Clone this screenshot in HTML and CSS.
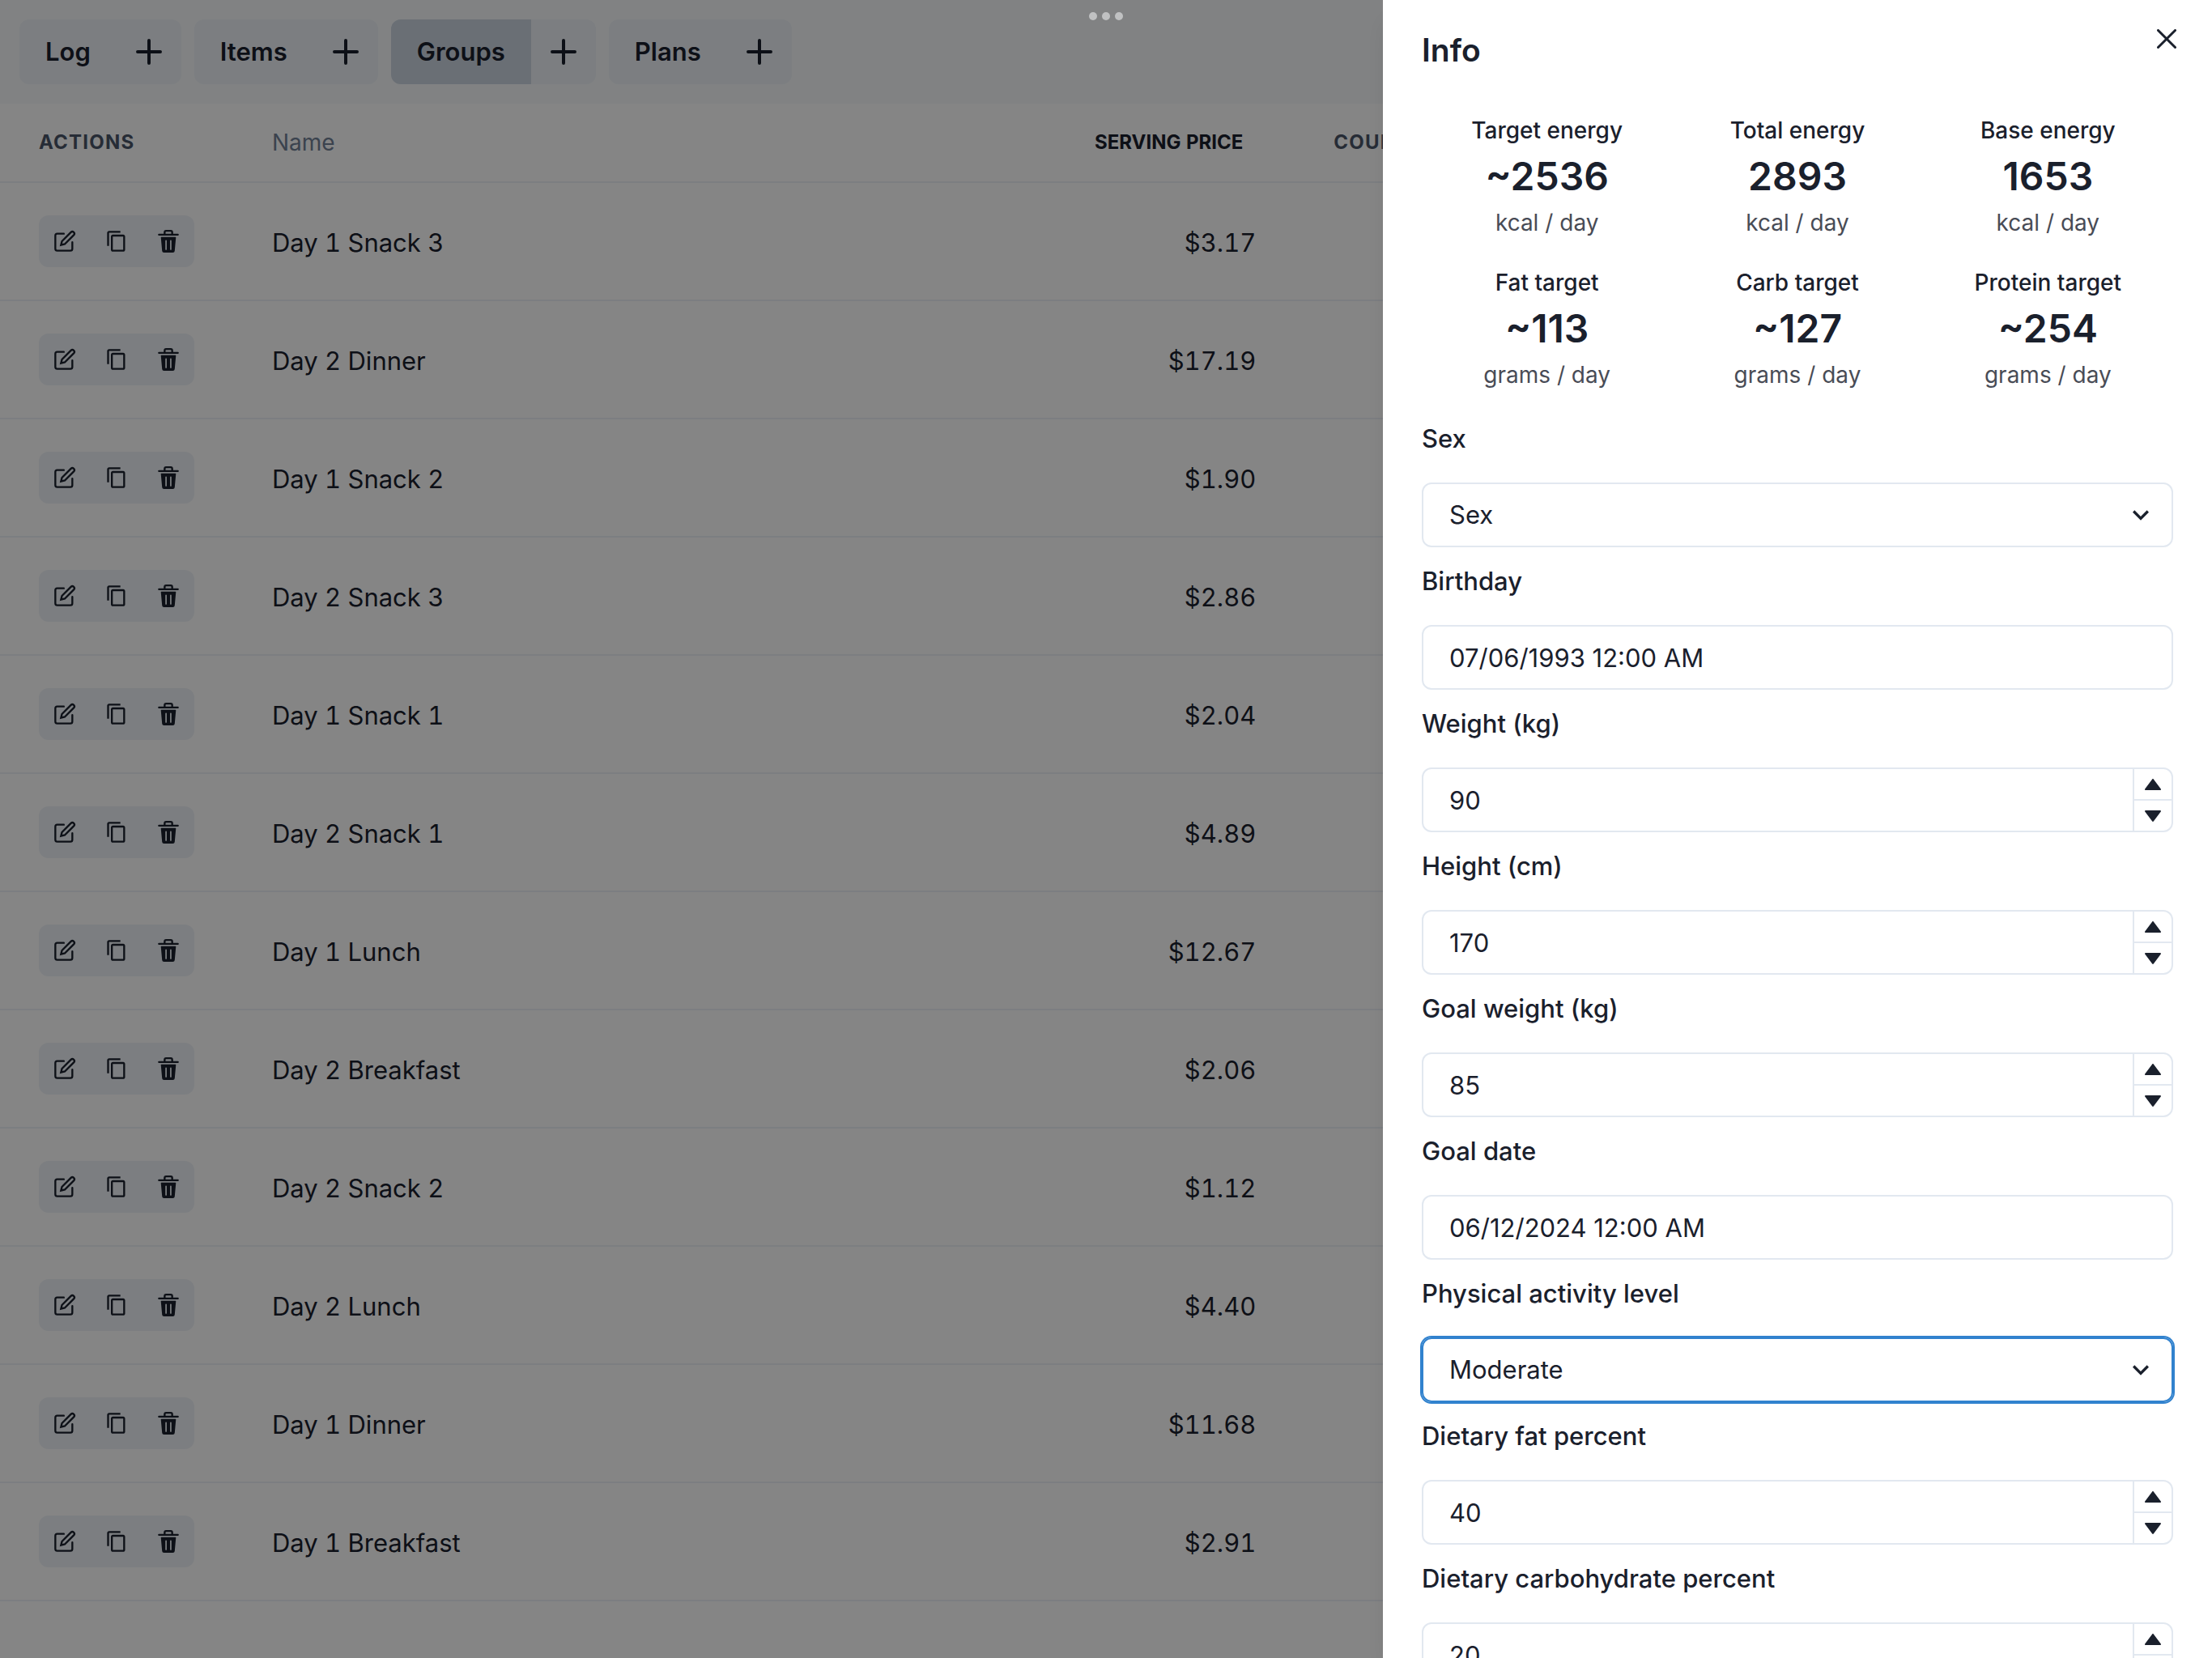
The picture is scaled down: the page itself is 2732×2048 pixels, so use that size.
FILE: index.html
```html
<!DOCTYPE html>
<html lang="en">
<head>
<meta charset="utf-8">
<meta name="viewport" content="width=device-width, initial-scale=1">
<title>Groups</title>
<link rel="stylesheet" href="styles.css">
</head>
<body>
<svg class="sprite" aria-hidden="true">
  <symbol id="i-add" viewBox="0 0 24 24"><path fill="currentColor" d="M0,12a1.5,1.5,0,0,0,1.5,1.5h8.75a.25.25,0,0,1,.25.25V22.5a1.5,1.5,0,0,0,3,0V13.75a.25.25,0,0,1,.25-.25H22.5a1.5,1.5,0,0,0,0-3H13.75a.25.25,0,0,1-.25-.25V1.5a1.5,1.5,0,0,0-3,0v8.75a.25.25,0,0,1-.25.25H1.5A1.5,1.5,0,0,0,0,12Z"/></symbol>
  <symbol id="i-edit" viewBox="0 0 24 24"><g fill="none" stroke="currentColor" stroke-width="2" stroke-linecap="round"><path d="M11 4H4a2 2 0 0 0-2 2v14a2 2 0 0 0 2 2h14a2 2 0 0 0 2-2v-7"/><path d="M18.5 2.5a2.121 2.121 0 0 1 3 3L12 15l-4 1 1-4 9.5-9.5z"/></g></symbol>
  <symbol id="i-copy" viewBox="0 0 24 24"><path fill="currentColor" d="M16 1H4c-1.1 0-2 .9-2 2v14h2V3h12V1zm3 4H8c-1.1 0-2 .9-2 2v14c0 1.1.9 2 2 2h11c1.1 0 2-.9 2-2V7c0-1.1-.9-2-2-2zm0 16H8V7h11v14z"/></symbol>
  <symbol id="i-delete" viewBox="0 0 24 24"><path fill="currentColor" d="M19.452 7.5H4.547a.5.5 0 00-.5.545l1.287 14.136A2 2 0 007.326 24h9.347a2 2 0 001.992-1.819L19.95 8.045a.5.5 0 00-.129-.382.5.5 0 00-.369-.163zm-9.2 13a.75.75 0 01-1.5 0v-9a.75.75 0 011.5 0zm5 0a.75.75 0 01-1.5 0v-9a.75.75 0 011.5 0zM22 4h-4.75a.25.25 0 01-.25-.25V2.5A2.5 2.5 0 0014.5 0h-5A2.5 2.5 0 007 2.5v1.25a.25.25 0 01-.25.25H2a1 1 0 000 2h20a1 1 0 000-2zM9 3.75V2.5a.5.5 0 01.5-.5h5a.5.5 0 01.5.5v1.25a.25.25 0 01-.25.25h-5.5A.25.25 0 019 3.75z"/></symbol>
  <symbol id="i-close" viewBox="0 0 24 24"><path fill="currentColor" d="M.439,21.44a1.5,1.5,0,0,0,2.122,2.121L11.823,14.3a.25.25,0,0,1,.354,0l9.262,9.263a1.5,1.5,0,1,0,2.122-2.121L14.3,12.177a.25.25,0,0,1,0-.354l9.263-9.262A1.5,1.5,0,0,0,21.439.44L12.177,9.7a.25.25,0,0,1-.354,0L2.561.44A1.5,1.5,0,0,0,.439,2.561L9.7,11.823a.25.25,0,0,1,0,.354Z"/></symbol>
  <symbol id="i-chevron" viewBox="0 0 24 24"><path fill="currentColor" d="M16.59 8.59L12 13.17 7.41 8.59 6 10l6 6 6-6z"/></symbol>
  <symbol id="i-up" viewBox="0 0 24 24"><path fill="currentColor" d="M12.8,5.4c-0.377-0.504-1.223-0.504-1.6,0l-9,12c-0.228,0.303-0.264,0.708-0.095,1.047C2.275,18.786,2.621,19,3,19h18c0.379,0,0.725-0.214,0.895-0.553c0.169-0.339,0.133-0.744-0.095-1.047L12.8,5.4z"/></symbol>
  <symbol id="i-down" viewBox="0 0 24 24"><path fill="currentColor" d="M21,5H3C2.621,5,2.275,5.214,2.105,5.553C1.937,5.892,1.973,6.297,2.2,6.6l9,12c0.188,0.252,0.485,0.4,0.8,0.4s0.611-0.148,0.8-0.4l9-12c0.228-0.303,0.264-0.708,0.095-1.047C21.725,5.214,21.379,5,21,5z"/></symbol>
</svg>

<div class="page">
  <nav class="topbar" aria-label="Main">
    <div class="tab"><a class="tab-link" href="#log">Log</a><button class="tab-add" type="button" aria-label="Add log"><svg><use href="#i-add"/></svg></button></div>
    <div class="tab"><a class="tab-link" href="#items">Items</a><button class="tab-add" type="button" aria-label="Add item"><svg><use href="#i-add"/></svg></button></div>
    <div class="tab"><a class="tab-link active" href="#groups" aria-current="page">Groups</a><button class="tab-add" type="button" aria-label="Add group"><svg><use href="#i-add"/></svg></button></div>
    <div class="tab"><a class="tab-link" href="#plans">Plans</a><button class="tab-add" type="button" aria-label="Add plan"><svg><use href="#i-add"/></svg></button></div>
  </nav>

  <table class="groups">
    <colgroup><col class="col-actions"><col class="col-name"><col class="col-price"><col></colgroup>
    <thead>
      <tr>
        <th scope="col">Actions</th>
        <th scope="col"><input class="filter" type="text" placeholder="Name" aria-label="Name"></th>
        <th scope="col" class="num"><button class="sort" type="button">Serving price</button></th>
        <th scope="col">Count</th>
      </tr>
    </thead>
    <tbody>
      <tr><td><div class="actions"><button type="button" aria-label="Edit"><svg><use href="#i-edit"/></svg></button><button type="button" aria-label="Copy"><svg><use href="#i-copy"/></svg></button><button type="button" aria-label="Delete"><svg><use href="#i-delete"/></svg></button></div></td><td>Day 1 Snack 3</td><td class="num">$3.17</td><td></td></tr>
      <tr><td><div class="actions"><button type="button" aria-label="Edit"><svg><use href="#i-edit"/></svg></button><button type="button" aria-label="Copy"><svg><use href="#i-copy"/></svg></button><button type="button" aria-label="Delete"><svg><use href="#i-delete"/></svg></button></div></td><td>Day 2 Dinner</td><td class="num">$17.19</td><td></td></tr>
      <tr><td><div class="actions"><button type="button" aria-label="Edit"><svg><use href="#i-edit"/></svg></button><button type="button" aria-label="Copy"><svg><use href="#i-copy"/></svg></button><button type="button" aria-label="Delete"><svg><use href="#i-delete"/></svg></button></div></td><td>Day 1 Snack 2</td><td class="num">$1.90</td><td></td></tr>
      <tr><td><div class="actions"><button type="button" aria-label="Edit"><svg><use href="#i-edit"/></svg></button><button type="button" aria-label="Copy"><svg><use href="#i-copy"/></svg></button><button type="button" aria-label="Delete"><svg><use href="#i-delete"/></svg></button></div></td><td>Day 2 Snack 3</td><td class="num">$2.86</td><td></td></tr>
      <tr><td><div class="actions"><button type="button" aria-label="Edit"><svg><use href="#i-edit"/></svg></button><button type="button" aria-label="Copy"><svg><use href="#i-copy"/></svg></button><button type="button" aria-label="Delete"><svg><use href="#i-delete"/></svg></button></div></td><td>Day 1 Snack 1</td><td class="num">$2.04</td><td></td></tr>
      <tr><td><div class="actions"><button type="button" aria-label="Edit"><svg><use href="#i-edit"/></svg></button><button type="button" aria-label="Copy"><svg><use href="#i-copy"/></svg></button><button type="button" aria-label="Delete"><svg><use href="#i-delete"/></svg></button></div></td><td>Day 2 Snack 1</td><td class="num">$4.89</td><td></td></tr>
      <tr><td><div class="actions"><button type="button" aria-label="Edit"><svg><use href="#i-edit"/></svg></button><button type="button" aria-label="Copy"><svg><use href="#i-copy"/></svg></button><button type="button" aria-label="Delete"><svg><use href="#i-delete"/></svg></button></div></td><td>Day 1 Lunch</td><td class="num">$12.67</td><td></td></tr>
      <tr><td><div class="actions"><button type="button" aria-label="Edit"><svg><use href="#i-edit"/></svg></button><button type="button" aria-label="Copy"><svg><use href="#i-copy"/></svg></button><button type="button" aria-label="Delete"><svg><use href="#i-delete"/></svg></button></div></td><td>Day 2 Breakfast</td><td class="num">$2.06</td><td></td></tr>
      <tr><td><div class="actions"><button type="button" aria-label="Edit"><svg><use href="#i-edit"/></svg></button><button type="button" aria-label="Copy"><svg><use href="#i-copy"/></svg></button><button type="button" aria-label="Delete"><svg><use href="#i-delete"/></svg></button></div></td><td>Day 2 Snack 2</td><td class="num">$1.12</td><td></td></tr>
      <tr><td><div class="actions"><button type="button" aria-label="Edit"><svg><use href="#i-edit"/></svg></button><button type="button" aria-label="Copy"><svg><use href="#i-copy"/></svg></button><button type="button" aria-label="Delete"><svg><use href="#i-delete"/></svg></button></div></td><td>Day 2 Lunch</td><td class="num">$4.40</td><td></td></tr>
      <tr><td><div class="actions"><button type="button" aria-label="Edit"><svg><use href="#i-edit"/></svg></button><button type="button" aria-label="Copy"><svg><use href="#i-copy"/></svg></button><button type="button" aria-label="Delete"><svg><use href="#i-delete"/></svg></button></div></td><td>Day 1 Dinner</td><td class="num">$11.68</td><td></td></tr>
      <tr><td><div class="actions"><button type="button" aria-label="Edit"><svg><use href="#i-edit"/></svg></button><button type="button" aria-label="Copy"><svg><use href="#i-copy"/></svg></button><button type="button" aria-label="Delete"><svg><use href="#i-delete"/></svg></button></div></td><td>Day 1 Breakfast</td><td class="num">$2.91</td><td></td></tr>
    </tbody>
  </table>
</div>

<div class="overlay"></div>
<div class="window-dots" aria-hidden="true"><span></span><span></span><span></span></div>

<aside class="drawer" role="dialog" aria-labelledby="drawer-title">
  <h2 class="drawer-title" id="drawer-title">Info</h2>
  <button class="close" type="button" aria-label="Close"><svg><use href="#i-close"/></svg></button>
  <div class="drawer-body">
    <div class="stats">
      <dl class="stat"><dt>Target energy</dt><dd class="value">~2536</dd><dd class="unit">kcal / day</dd></dl>
      <dl class="stat"><dt>Total energy</dt><dd class="value">2893</dd><dd class="unit">kcal / day</dd></dl>
      <dl class="stat"><dt>Base energy</dt><dd class="value">1653</dd><dd class="unit">kcal / day</dd></dl>
      <dl class="stat"><dt>Fat target</dt><dd class="value">~113</dd><dd class="unit">grams / day</dd></dl>
      <dl class="stat"><dt>Carb target</dt><dd class="value">~127</dd><dd class="unit">grams / day</dd></dl>
      <dl class="stat"><dt>Protein target</dt><dd class="value">~254</dd><dd class="unit">grams / day</dd></dl>
    </div>

    <form class="form">
      <div class="field">
        <label for="sex">Sex</label>
        <div class="control"><select id="sex"><option>Sex</option></select><svg class="chevron"><use href="#i-chevron"/></svg></div>
      </div>
      <div class="field">
        <label for="birthday">Birthday</label>
        <div class="control"><input id="birthday" type="text" value="07/06/1993 12:00 AM"></div>
      </div>
      <div class="field">
        <label for="weight">Weight (kg)</label>
        <div class="control"><input id="weight" type="number" value="90"><div class="stepper"><button type="button" aria-label="Increase weight"><svg><use href="#i-up"/></svg></button><button type="button" aria-label="Decrease weight"><svg><use href="#i-down"/></svg></button></div></div>
      </div>
      <div class="field">
        <label for="height">Height (cm)</label>
        <div class="control"><input id="height" type="number" value="170"><div class="stepper"><button type="button" aria-label="Increase height"><svg><use href="#i-up"/></svg></button><button type="button" aria-label="Decrease height"><svg><use href="#i-down"/></svg></button></div></div>
      </div>
      <div class="field">
        <label for="goal-weight">Goal weight (kg)</label>
        <div class="control"><input id="goal-weight" type="number" value="85"><div class="stepper"><button type="button" aria-label="Increase goal weight"><svg><use href="#i-up"/></svg></button><button type="button" aria-label="Decrease goal weight"><svg><use href="#i-down"/></svg></button></div></div>
      </div>
      <div class="field">
        <label for="goal-date">Goal date</label>
        <div class="control"><input id="goal-date" type="text" value="06/12/2024 12:00 AM"></div>
      </div>
      <div class="field">
        <label for="activity">Physical activity level</label>
        <div class="control focused"><select id="activity"><option>Moderate</option></select><svg class="chevron"><use href="#i-chevron"/></svg></div>
      </div>
      <div class="field">
        <label for="fat">Dietary fat percent</label>
        <div class="control"><input id="fat" type="number" value="40"><div class="stepper"><button type="button" aria-label="Increase fat"><svg><use href="#i-up"/></svg></button><button type="button" aria-label="Decrease fat"><svg><use href="#i-down"/></svg></button></div></div>
      </div>
      <div class="field">
        <label for="carbs">Dietary carbohydrate percent</label>
        <div class="control"><input id="carbs" type="number" value="20"><div class="stepper"><button type="button" aria-label="Increase carbohydrate"><svg><use href="#i-up"/></svg></button><button type="button" aria-label="Decrease carbohydrate"><svg><use href="#i-down"/></svg></button></div></div>
      </div>
    </form>
  </div>
</aside>
</body>
</html>
```
FILE: styles.css
```css
:root {
  --ink: #1a202c;
  --muted: #4a5568;
  --line: #e2e8f0;
  --soft: #edf2f7;
}

*, *::before, *::after { box-sizing: border-box; }

html, body { height: 100%; }

body {
  margin: 0;
  overflow: hidden;
  background: #fff;
  color: var(--ink);
  font-family: Inter, "Liberation Sans", sans-serif;
  font-size: 31px;
  line-height: 48px;
}

button, input, select { font: inherit; color: inherit; }
button { border: 0; padding: 0; background: none; cursor: pointer; }
svg { display: block; }
.sprite { display: none; }

/* Top navigation */
.topbar {
  display: flex;
  gap: 16px;
  padding: 24px;
  background: #f7fafc;
}
.tab {
  display: flex;
  height: 80px;
  border-radius: 12px;
  overflow: hidden;
  background: var(--soft);
}
.tab-link {
  display: flex;
  align-items: center;
  padding: 0 32px;
  color: inherit;
  font-weight: 600;
  text-decoration: none;
}
.tab-link.active { background: #cbd5e0; }
.tab-add {
  display: flex;
  align-items: center;
  justify-content: center;
  width: 80px;
}
.tab-add svg { width: 32px; height: 32px; }

/* Groups table */
.groups {
  width: 100%;
  table-layout: fixed;
  border-collapse: separate;
  border-spacing: 0;
  font-variant-numeric: lining-nums tabular-nums;
}
.col-actions { width: 288px; }
.col-name { width: 36%; }
.col-price { width: 12%; }
.groups th {
  height: 98px;
  padding: 0 48px;
  border-bottom: 2px solid var(--soft);
  color: var(--muted);
  font-size: 24px;
  font-weight: 700;
  line-height: 32px;
  letter-spacing: 0.05em;
  text-align: left;
  text-transform: uppercase;
  white-space: nowrap;
}
.groups td {
  padding: 40px 48px;
  border-bottom: 2px solid var(--soft);
}
.groups td + td { padding: 42px 48px 38px; }
.groups .num { text-align: right; }
.groups th.num { padding-right: 64px; }
.filter {
  display: block;
  width: 100%;
  height: 48px;
  padding: 0;
  border: 0;
  background: none;
  font-size: 28px;
  font-weight: 400;
}
.filter::placeholder { color: #718096; opacity: 1; }
.sort {
  color: var(--ink);
  font-size: 24px;
  font-weight: 700;
  text-transform: uppercase;
}
.actions {
  display: flex;
  width: 192px;
  border-radius: 12px;
  background: var(--soft);
}
.actions button {
  display: flex;
  flex: 1;
  align-items: center;
  justify-content: center;
  height: 64px;
}
.actions svg { width: 28px; height: 28px; }

/* Layers above the page */
.overlay {
  position: fixed;
  inset: 0;
  background: rgba(0, 0, 0, 0.48);
}
.window-dots {
  position: fixed;
  top: 15px;
  left: 0;
  right: 0;
  display: flex;
  justify-content: center;
  gap: 6px;
}
.window-dots span {
  width: 10px;
  height: 10px;
  border-radius: 50%;
  background: #c0c1c2;
}
.drawer {
  position: fixed;
  top: 0;
  right: 0;
  bottom: 0;
  width: 100%;
  max-width: 1024px;
  overflow-y: auto;
  scrollbar-width: none;
  background: #fff;
  box-shadow: 0 20px 30px -6px rgba(0, 0, 0, 0.1), 0 8px 12px -4px rgba(0, 0, 0, 0.05);
}
.drawer-title {
  margin: 0;
  padding: 32px 48px;
  font-size: 39px;
  font-weight: 600;
  line-height: 60px;
}
.close {
  position: absolute;
  top: 16px;
  right: 24px;
  display: flex;
  align-items: center;
  justify-content: center;
  width: 64px;
  height: 64px;
}
.close svg { width: 24px; height: 24px; }
.drawer-body { padding: 16px 48px; }

/* Daily targets */
.stats {
  display: grid;
  grid-template-columns: repeat(3, 1fr);
  row-gap: 32px;
  margin-bottom: 32px;
  text-align: center;
}
.stat {
  margin: 0;
  font-size: 28px;
  line-height: 42px;
}
.stat dt { font-weight: 500; }
.stat dd { margin: 0; }
.stat .value {
  font-size: 48px;
  font-weight: 600;
  line-height: 72px;
}
.stat .unit { opacity: 0.8; }

/* Form */
.form {
  display: flex;
  flex-direction: column;
  gap: 16px;
}
.field {
  display: flex;
  flex-direction: column;
  gap: 28px;
}
.field label {
  font-weight: 500;
  line-height: 52px;
}
.control {
  position: relative;
  display: flex;
  height: 80px;
  border: 2px solid var(--line);
  border-radius: 12px;
}
.control.focused {
  border-color: #3182ce;
  box-shadow: 0 0 0 2px #3182ce;
}
.control input,
.control select {
  flex: 1;
  min-width: 0;
  padding: 0 32px;
  border: 0;
  border-radius: 12px;
  outline: 0;
  background: none;
  appearance: none;
}
.control input { padding-top: 2px; }
.control input[type="number"] { appearance: textfield; }
.chevron {
  position: absolute;
  top: 18px;
  right: 18px;
  width: 40px;
  height: 40px;
  pointer-events: none;
}
.stepper {
  display: flex;
  flex-direction: column;
  width: 48px;
  border-left: 2px solid var(--line);
}
.stepper button {
  display: flex;
  flex: 1;
  align-items: center;
  justify-content: center;
}
.stepper button + button { border-top: 2px solid var(--line); }
.stepper svg { width: 24px; height: 24px; }
```
